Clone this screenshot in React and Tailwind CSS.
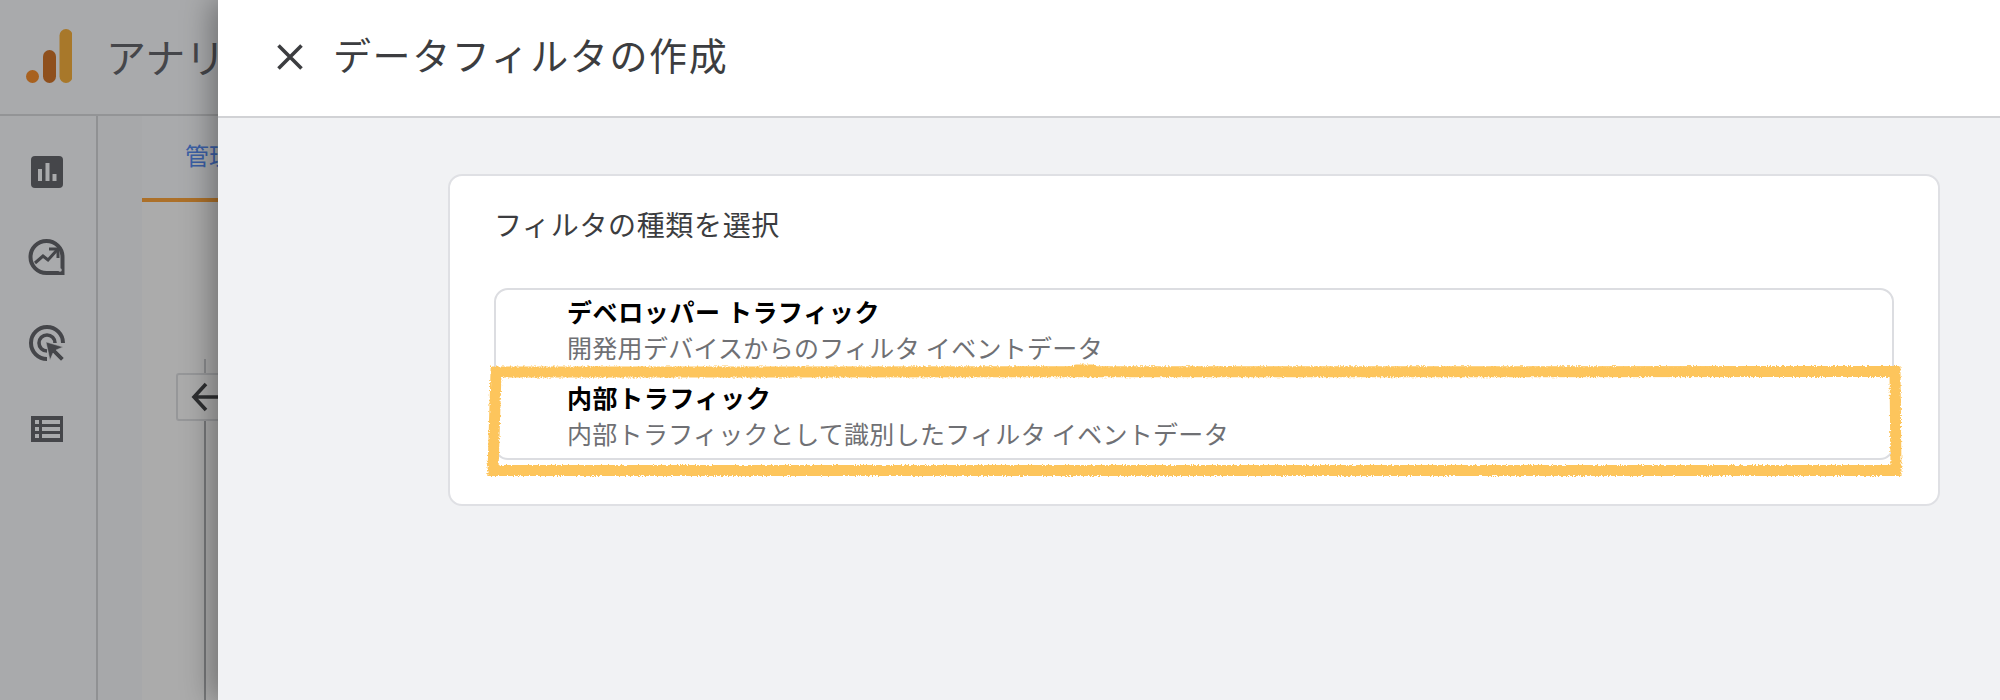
import React from 'react'

const cjk = "font-['Noto_Sans_CJK_JP','Noto_Sans',sans-serif]"

function Logo() {
  return (
    <svg width="46" height="54" viewBox="0 0 46 54" className="shrink-0">
      <circle cx="6.5" cy="47.5" r="6.5" fill="#a8611f" />
      <rect x="17" y="21" width="13" height="33" rx="6.5" fill="#8f501d" />
      <rect x="33.5" y="0" width="13" height="54" rx="6.5" fill="#a8782a" />
    </svg>
  )
}

function ReportIcon() {
  return (
    <svg width="32" height="32" viewBox="0 0 32 32">
      <rect width="32" height="32" rx="4" fill="#45464a" />
      <rect x="7" y="13" width="4" height="12" fill="#a9aaac" />
      <rect x="14.5" y="7" width="4" height="18" fill="#a9aaac" />
      <rect x="21.5" y="18" width="4" height="7" fill="#a9aaac" />
    </svg>
  )
}

function ExploreIcon() {
  return (
    <svg width="38" height="38" viewBox="0 0 38 38" fill="none">
      <path d="M34.5 19a16 16 0 1 0-16 16h16z" stroke="#45464a" strokeWidth="4" />
      <path d="M7 25l8-7 5 4 9-10" stroke="#45464a" strokeWidth="3" />
      <path d="M21 11h9v9" stroke="#45464a" strokeWidth="3" />
      <circle cx="32" cy="32" r="1.8" fill="#a9aaac" />
    </svg>
  )
}

function AdvertisingIcon() {
  return (
    <svg width="38" height="38" viewBox="0 0 38 38" fill="none">
      <path d="M19 35a16 16 0 1 1 16-16" stroke="#45464a" strokeWidth="4" />
      <path d="M19 27a8 8 0 1 1 8-8" stroke="#45464a" strokeWidth="3.6" />
      <path d="M18 18l17 5-7 3 8 8-3 3-8-8-3 7z" fill="#45464a" stroke="#a9aaac" strokeWidth="0.5" />
    </svg>
  )
}

function ListIcon() {
  return (
    <svg width="32" height="26" viewBox="0 0 32 26">
      <rect width="32" height="26" fill="#45464a" />
      <rect x="4" y="4" width="4" height="4" fill="#a9aaac" />
      <rect x="11" y="4" width="18" height="4" fill="#a9aaac" />
      <rect x="4" y="11" width="4" height="4" fill="#a9aaac" />
      <rect x="11" y="11" width="18" height="4" fill="#a9aaac" />
      <rect x="4" y="18" width="4" height="4" fill="#a9aaac" />
      <rect x="11" y="18" width="18" height="4" fill="#a9aaac" />
    </svg>
  )
}

function Row({ title, sub, className }) {
  return (
    <div className={`pl-[71px] ${className}`}>
      <p className="text-[25px] leading-[36px] font-bold text-black tracking-[0.6px]">{title}</p>
      <p className="text-[25px] leading-[36px] text-[#6f7074] tracking-[0.3px]">{sub}</p>
    </div>
  )
}

export default function App() {
  return (
    <div className={`relative w-[2000px] h-[700px] overflow-hidden bg-[#a9aaac] ${cjk}`}>
      {/* 背後の画面 */}
      <div className="flex flex-col h-full">
        <div className="h-[116px] shrink-0 border-b-2 border-[#939496] flex items-center pl-[26px] pb-[2px]">
          <Logo />
          <span className="ml-[34px] text-[40px] text-[#45464a] whitespace-nowrap">アナリ</span>
        </div>
        <div className="flex flex-1">
          <div className="w-[98px] border-r-2 border-[#909193] flex flex-col items-center pt-[40px] pr-[2px]">
            <ReportIcon />
            <div className="mt-[50px]"><ExploreIcon /></div>
            <div className="mt-[48px]"><AdvertisingIcon /></div>
            <div className="mt-[54px]"><ListIcon /></div>
          </div>
          <div className="w-[44px] bg-[#a7a8aa]" />
          <div className="flex-1 flex flex-col bg-[#ababab]">
            <div className="h-[86px] border-b-4 border-[#ac7029] pl-[43px] pt-[21px] bg-[#a9aaac]">
              <span className="text-[24px] text-[#3b5fa5] whitespace-nowrap">管理</span>
            </div>
            <div className="pl-[34px] pt-[171px]">
              <div className="relative w-[60px] h-[48px] border-2 border-[#969799] rounded-[3px] flex items-center pl-[13px]">
                <svg width="40" height="30" viewBox="0 0 40 30" fill="none" stroke="#2e2f31" strokeWidth="3.6">
                  <path d="M15 2L3 15l12 13M3 15h37" />
                </svg>
                <div className="absolute left-[26px] -top-[16px] w-[2px] h-[14px] bg-[#8a8b8d]" />
                <div className="absolute left-[26px] top-[46px] w-[2px] h-[300px] bg-[#77787a]" />
              </div>
            </div>
          </div>
        </div>
      </div>

      {/* ドロワー */}
      <div className="absolute top-0 bottom-0 left-[218px] right-0 flex flex-col bg-[#f1f2f4] shadow-[-6px_0_28px_rgba(0,0,0,0.35)]">
        <div className="h-[118px] shrink-0 bg-white border-b-2 border-[#d1d2d5] flex items-center pl-[59px] pb-[4px]">
          <svg width="26" height="26" viewBox="0 0 26 26" fill="none" stroke="#3c3d40" strokeWidth="3.6" className="mt-[2px]">
            <path d="M1.5 1.5l23 23M24.5 1.5l-23 23" />
          </svg>
          <h1 className="ml-[30px] -mt-[5px] text-[38px] leading-none font-normal text-[#3c3d40] tracking-[1.6px]">データフィルタの作成</h1>
        </div>
        <div className="flex-1 pl-[230px] pr-[60px] pt-[56px]">
          <div className="h-[332px] bg-white border-2 border-[#dfe0e4] rounded-[14px] px-[44px] pt-[28px]">
            <h2 className="text-[28px] leading-[40px] font-normal text-[#3c3d40] tracking-[0.65px]">フィルタの種類を選択</h2>
            <div className="mt-[44px] h-[172px] border-2 border-[#dcdde1] rounded-[14px]">
              <Row className="pt-[3px]" title="デベロッパー トラフィック" sub="開発用デバイスからのフィルタ イベントデータ" />
              <Row className="pt-[14px]" title="内部トラフィック" sub="内部トラフィックとして識別したフィルタ イベントデータ" />
            </div>
          </div>
        </div>
      </div>

      {/* 手描きの黄色い枠 */}
      <svg className="absolute inset-0 pointer-events-none" width="2000" height="700" viewBox="0 0 2000 700" fill="none">
        <defs>
          <filter id="rough" x="-2%" y="-10%" width="104%" height="120%">
            <feTurbulence type="fractalNoise" baseFrequency="0.6" numOctaves="2" seed="4" />
            <feDisplacementMap in="SourceGraphic" scale="4" />
          </filter>
        </defs>
        <g filter="url(#rough)" stroke="#fdc55c" strokeWidth="11">
          <path d="M496 372L1895 371.5L1896 470.5L493 470.5Z" />
          <path d="M1076 370.5h16" strokeWidth="12" strokeLinecap="round" />
        </g>
      </svg>
    </div>
  )
}
